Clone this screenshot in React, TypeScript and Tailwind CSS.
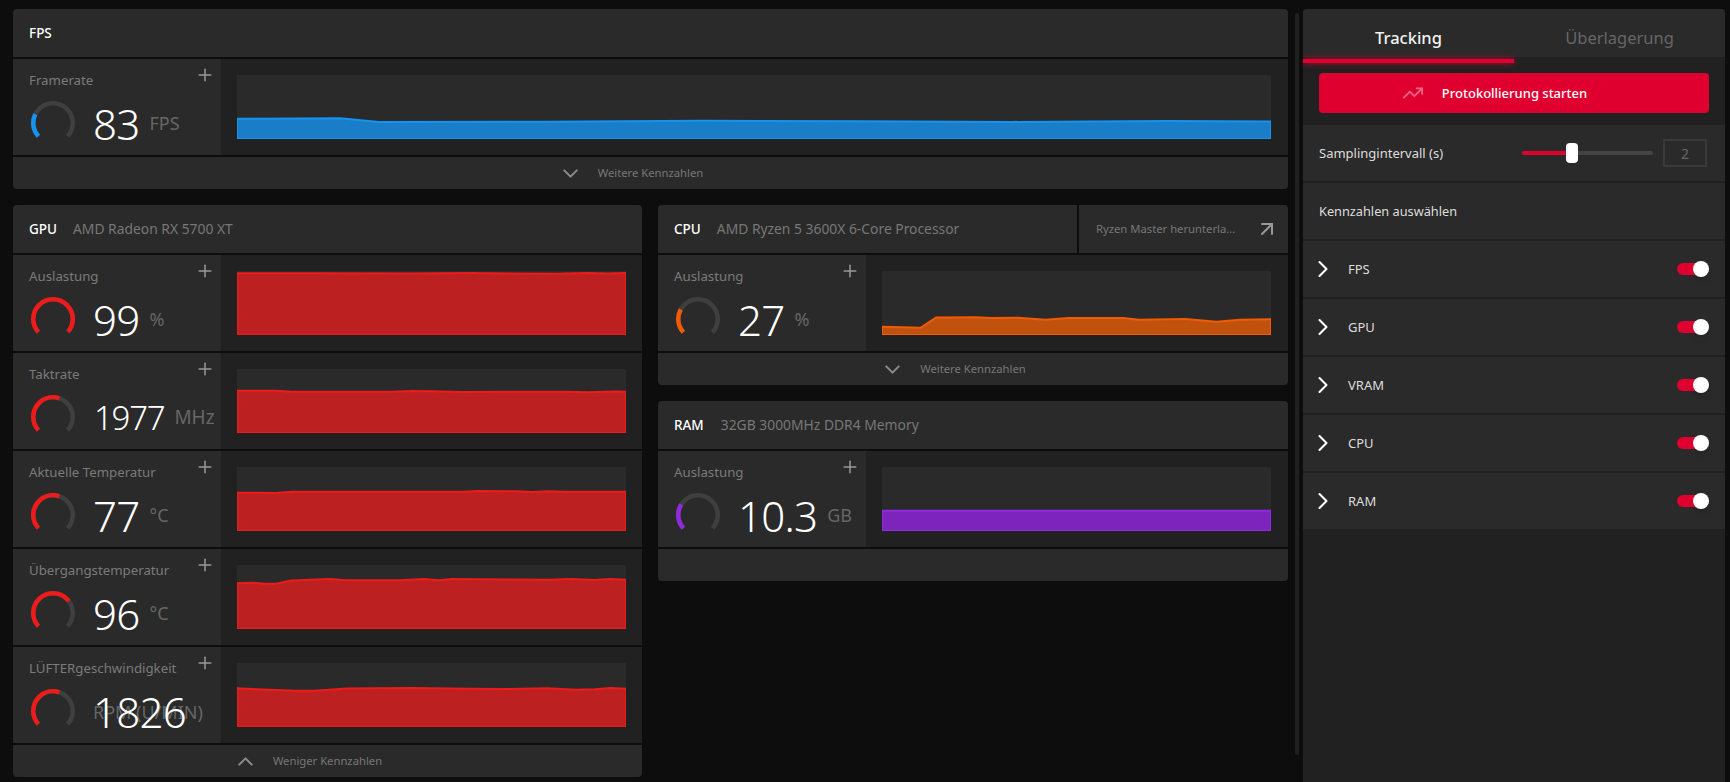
import { ChevronDown, ChevronRight, ChevronUp, Plus, ArrowUpRight, TrendingUp } from "lucide-react";

type Pt = [number, number];

const fps: Pt[] = [[0, 43], [0.1, 42.6], [0.137, 46.2], [0.3, 46], [0.45, 45], [0.6, 45.6], [0.75, 46.2], [0.9, 45.4], [1, 45.7]];
const util: Pt[] = [[0, 1.5], [0.2, 1.6], [0.45, 1.8], [0.6, 1.3], [0.7, 1.8], [0.82, 2], [0.9, 1.2], [0.95, 1.8], [1, 1.4]];
const clock: Pt[] = [[0, 21], [0.1, 21], [0.14, 22], [0.4, 22], [0.45, 21.3], [0.5, 21.6], [0.58, 22.2], [0.85, 22], [0.9, 22.6], [0.97, 21.7], [1, 22]];
const temp: Pt[] = [[0, 25], [0.1, 25.2], [0.14, 24], [0.58, 24], [0.62, 23.4], [0.72, 23.6], [0.76, 24.2], [0.8, 23.6], [0.84, 24], [1, 24]];
const junction: Pt[] = [[0, 17.6], [0.04, 17], [0.07, 18], [0.1, 18], [0.14, 14.7], [0.24, 13.4], [0.28, 14.5], [0.42, 14.5], [0.48, 13.4], [0.52, 14.5], [0.55, 13.4], [0.7, 13.8], [0.8, 14], [0.86, 13.4], [0.92, 14.2], [0.96, 13.4], [1, 14]];
const fan: Pt[] = [[0, 24.5], [0.05, 25.5], [0.15, 27], [0.2, 27], [0.28, 24.8], [0.45, 24.2], [0.6, 25], [0.68, 25.4], [0.8, 24.5], [0.87, 26], [0.92, 25.5], [0.96, 24.2], [1, 25]];
const cpu: Pt[] = [[0, 55], [0.1, 56], [0.139, 45.7], [0.24, 45.5], [0.28, 46.4], [0.35, 46], [0.42, 48], [0.48, 46.2], [0.62, 46.4], [0.66, 48], [0.78, 47.2], [0.86, 50], [0.92, 48], [1, 47.5]];
const ram: Pt[] = [[0, 43], [1, 43]];

const blue = { stroke: "#1593ef", fill: "#1a7dc8" };
const red = { stroke: "#ee1b1b", fill: "#bd2020" };
const orange = { stroke: "#f25a05", fill: "#c0520e" };
const purple = { stroke: "#8f2ae0", fill: "#7d24bd" };
type Tone = typeof blue;

function Chart({ pts, tone, w }: { pts: Pt[]; tone: Tone; w: number }) {
  const top = pts.map(([x, y]) => `${(x * w).toFixed(1)},${y + 0.7}`).join(" ");
  return (
    <svg width={w} height={64} viewBox={`0 0 ${w} 64`} className="block bg-[#2a2a2a]">
      <polygon points={`0,64 ${top} ${w},64`} fill={tone.fill} />
      <polyline points={`0.5,64 0.5,${pts[0][1]}`} stroke={tone.stroke} strokeWidth="1" fill="none" />
      <polyline points={`${w - 0.5},64 ${w - 0.5},${pts[pts.length - 1][1]}`} stroke={tone.stroke} strokeWidth="1" fill="none" />
      <polyline points={`0,63.5 ${w},63.5`} stroke={tone.stroke} strokeWidth="1" fill="none" />
      <polyline points={top} stroke={tone.stroke} strokeWidth="2" fill="none" />
    </svg>
  );
}

function Gauge({ pct, color }: { pct: number; color: string }) {
  const r = 19.75;
  const a0 = (137.6 * Math.PI) / 180;
  const a1 = (42.4 * Math.PI) / 180;
  const d = `M ${22 + r * Math.cos(a0)} ${22 + r * Math.sin(a0)} A ${r} ${r} 0 1 1 ${22 + r * Math.cos(a1)} ${22 + r * Math.sin(a1)}`;
  return (
    <svg width="44" height="44" viewBox="0 0 44 44" className="block shrink-0">
      <path d={d} stroke="#3f3f3f" strokeWidth="4.5" fill="none" />
      <path d={d} stroke={color} strokeWidth="4.5" fill="none" pathLength={100} strokeDasharray={`${pct} 100`} />
    </svg>
  );
}

function Metric(props: {
  label: string;
  value: string;
  unit: string;
  pct: number;
  tone: Tone;
  pts: Pt[];
  w: number;
  small?: boolean;
  overlap?: boolean;
}) {
  const { label, value, unit, pct, tone, pts, w, small, overlap } = props;
  return (
    <div className="flex h-24 bg-[#212121]">
      <div className="relative w-[208px] shrink-0 bg-[#2a2a2a] pt-[11px]">
        <div className="pl-4 text-[13.25px] leading-5 text-[#7a7a7a]">{label}</div>
        <Plus size={20} strokeWidth={1.8} className="absolute left-[182px] top-[6px] text-[#999999]" />
        <div className="relative mt-[11px] flex h-11 items-center pl-[18px]">
          <Gauge pct={pct} color={tone.stroke} />
          <span
            className={
              small
                ? "relative z-10 mt-[2px] ml-[19px] text-[33px] leading-[44px] font-light tracking-[-1.25px] text-white"
                : "relative z-10 mt-[2px] ml-[18px] text-[42px] leading-[44px] font-light tracking-[-0.75px] text-white"
            }
          >
            {value}
          </span>
          {overlap ? (
            <span className="absolute left-[80px] top-[11px] text-[18px] leading-6 text-[#666666]">{unit}</span>
          ) : (
            <span className={small ? "ml-[10px] text-[19px] leading-6 text-[#666666]" : "ml-[10px] text-[18px] leading-6 text-[#666666]"}>
              {unit}
            </span>
          )}
        </div>
      </div>
      <div className="flex-1 pt-4 pl-4">
        <Chart pts={pts} tone={tone} w={w} />
      </div>
    </div>
  );
}

function Header({ title, sub, sub2 }: { title: string; sub?: string; sub2?: boolean }) {
  return (
    <div className="flex h-12 w-full items-center bg-[#2a2a2a] pl-4 text-[13.85px]">
      <span className="pt-px text-[13.5px] font-medium text-white">{title}</span>
      {sub && <span className={sub2 ? "ml-[17px] text-[#777777]" : "ml-4 text-[#777777]"}>{sub}</span>}
    </div>
  );
}

function Footer({ label, up }: { label?: string; up?: boolean }) {
  return (
    <div className="flex h-8 items-center justify-center bg-[#2a2a2a] pr-[40px] text-[11.25px] text-[#777777]">
      {label && (
        <>
          {up ? <ChevronUp size={25} strokeWidth={2} className="text-[#8a8a8a]" /> : <ChevronDown size={25} strokeWidth={2} className="text-[#8a8a8a]" />}
          <span className="ml-[15px]">{label}</span>
        </>
      )}
    </div>
  );
}

function Toggle() {
  return (
    <div className="relative h-3 w-[32px] rounded-full bg-[#df0030]">
      <div className="absolute -top-[2px] right-0 h-4 w-4 rounded-full bg-white shadow-md" />
    </div>
  );
}

function SideRow({ label }: { label: string }) {
  return (
    <div className="flex h-14 items-center bg-[#2a2a2a] px-4">
      <ChevronRight size={28} strokeWidth={1.8} className="-ml-[10.5px] text-white" />
      <span className="ml-[11.5px] flex-1 pt-[2px] text-[13px] text-[#dddddd]">{label}</span>
      <Toggle />
    </div>
  );
}

export default function App() {
  return (
    <div className="flex h-[782px] w-[1730px] overflow-hidden bg-[#0d0d0d] pt-[9px] pl-[13px] [font-family:'Noto_Sans',sans-serif]">
      <div className="flex w-[1275px] shrink-0 flex-col gap-4">
        <section className="flex flex-col gap-[2px] overflow-hidden rounded">
          <Header title="FPS" />
          <Metric label="Framerate" value="83" unit="FPS" pct={26} tone={blue} pts={fps} w={1034} />
          <Footer label="Weitere Kennzahlen" />
        </section>
        <div className="flex items-start gap-4">
          <section className="flex w-[629px] flex-col gap-[2px] overflow-hidden rounded">
            <Header title="GPU" sub="AMD Radeon RX 5700 XT" />
            <Metric label="Auslastung" value="99" unit="%" pct={99} tone={red} pts={util} w={389} />
            <Metric label="Taktrate" value="1977" unit="MHz" pct={57} tone={red} pts={clock} w={389} small />
            <Metric label="Aktuelle Temperatur" value="77" unit="°C" pct={57} tone={red} pts={temp} w={389} />
            <Metric label="Übergangstemperatur" value="96" unit="°C" pct={70} tone={red} pts={junction} w={389} />
            <Metric label="LÜFTERgeschwindigkeit" value="1826" unit="RPM (U/MIN)" pct={57} tone={red} pts={fan} w={389} overlap />
            <Footer label="Weniger Kennzahlen" up />
          </section>
          <div className="flex w-[630px] flex-col gap-4">
            <section className="flex flex-col gap-[2px] overflow-hidden rounded">
              <div className="flex gap-[2px]">
                <div className="min-w-0 flex-1">
                  <Header title="CPU" sub="AMD Ryzen 5 3600X 6-Core Processor" />
                </div>
                <div className="flex h-12 w-[209px] items-center justify-between bg-[#2a2a2a] pr-[9px] pl-[17px] text-[11.25px] text-[#777777]">
                  <span>Ryzen Master herunterla...</span>
                  <ArrowUpRight size={24} strokeWidth={2} className="text-[#999999]" />
                </div>
              </div>
              <Metric label="Auslastung" value="27" unit="%" pct={27} tone={orange} pts={cpu} w={389} />
              <Footer label="Weitere Kennzahlen" />
            </section>
            <section className="flex flex-col gap-[2px] overflow-hidden rounded">
              <Header title="RAM" sub="32GB 3000MHz DDR4 Memory" sub2 />
              <Metric label="Auslastung" value="10.3" unit="GB" pct={28} tone={purple} pts={ram} w={389} />
              <Footer />
            </section>
          </div>
        </div>
      </div>
      <div className="mt-1 ml-[7px] h-[742px] w-1 shrink-0 rounded bg-[#202020]" />
      <aside className="ml-1 flex w-[422px] shrink-0 flex-col overflow-hidden rounded-t bg-[#212121]">
        <div className="flex h-12 shrink-0 bg-[#2a2a2a] pt-[10px] text-[16.5px]">
          <div className="flex w-[211px] items-center justify-center font-medium text-[#f2f2f2]">Tracking</div>
          <div className="flex w-[211px] items-center justify-center text-[#666666]">Überlagerung</div>
        </div>
        <div className="mt-[2px] h-1 w-[211px] shrink-0 bg-[#df0030] shadow-[0_0_6px_#df0030]" />
        <div className="px-4 pt-[10px] pb-3">
          <div className="flex h-10 items-center justify-center rounded bg-[#df0030] pr-[39px] text-[13px] font-medium text-white">
            <TrendingUp size={22} strokeWidth={2} className="mr-[18px] text-white opacity-40" />
            <span className="pt-[2px]">Protokollierung starten</span>
          </div>
        </div>
        <div className="flex h-14 shrink-0 items-center bg-[#2a2a2a] pr-[18px] pl-4 text-[13px] text-[#dddddd]">
          <span className="flex-1 pt-[2px]">Samplingintervall (s)</span>
          <div className="relative h-1 w-[131px] rounded-full bg-[#444444]">
            <div className="h-1 w-11 rounded-l-full bg-[#df0030]" />
            <div className="absolute -top-2 left-11 h-5 w-3 rounded-sm bg-white" />
          </div>
          <div className="ml-[10px] flex h-7 w-11 items-center justify-center border-2 border-[#3a3a3a] text-[14px] text-[#666666]">2</div>
        </div>
        <div className="mt-[2px] flex h-14 shrink-0 items-center bg-[#2a2a2a] px-4 pt-[2px] text-[12.75px] text-[#dddddd]">Kennzahlen auswählen</div>
        <div className="mt-[2px] flex flex-col gap-[2px]">
          <SideRow label="FPS" />
          <SideRow label="GPU" />
          <SideRow label="VRAM" />
          <SideRow label="CPU" />
          <SideRow label="RAM" />
        </div>
      </aside>
    </div>
  );
}
